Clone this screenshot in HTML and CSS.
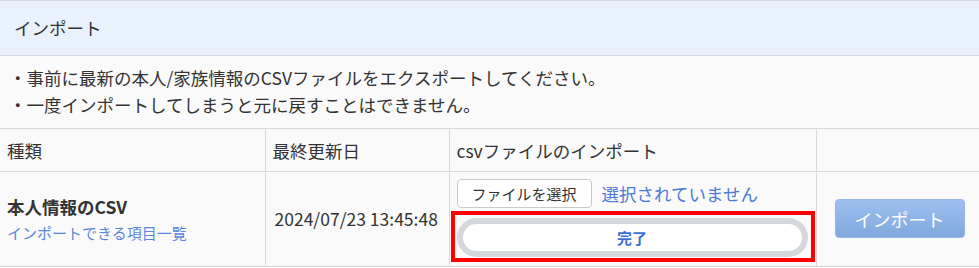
FILE: index.html
```html
<!DOCTYPE html>
<html lang="ja">
<head>
    <meta charset="UTF-8">
    <meta name="viewport" content="width=device-width, initial-scale=1.0">
    <title>インポート</title>
    <link rel="stylesheet" href="styles.css">
</head>
<body>
    <div class="panel">
        <div class="panel-head">インポート</div>
        <div class="panel-notes">
            <p>・事前に最新の本人/家族情報のCSVファイルをエクスポートしてください。</p>
            <p>・一度インポートしてしまうと元に戻すことはできません。</p>
        </div>
        <table class="import-table">
            <thead>
                <tr>
                    <th class="col-kind">種類</th>
                    <th class="col-date">最終更新日</th>
                    <th class="col-file">csvファイルのインポート</th>
                    <th class="col-action"></th>
                </tr>
            </thead>
            <tbody>
                <tr>
                    <td>
                        <div class="kind-name">本人情報のCSV</div>
                        <a href="#" class="kind-link">インポートできる項目一覧</a>
                    </td>
                    <td class="date">2024/07/23 13:45:48</td>
                    <td class="file-cell">
                        <div class="file-row">
                            <button class="btn-choose">ファイルを選択</button>
                            <span class="file-none">選択されていません</span>
                        </div>
                        <div class="highlight">
                            <div class="done-pill">完了</div>
                        </div>
                    </td>
                    <td class="action-cell">
                        <button class="btn-import">インポート</button>
                    </td>
                </tr>
            </tbody>
        </table>
    </div>
</body>
</html>
```

FILE: styles.css
```css
*{
    padding: 0;
    margin: 0;
    box-sizing: border-box;
}
body{
    font-family: "Noto Sans CJK JP", "Noto Sans", sans-serif;
    font-size: 17.5px;
    color: #333;
    background: #fafafa;
}
.panel{
    border-top: 1px solid #d6d9de;
}
.panel-head{
    height: 55px;
    line-height: 54px;
    padding-left: 14px;
    background: #e8f1fc;
    border-bottom: 1px solid #d6d9de;
}
.panel-notes{
    padding: 8px 0 10px 9px;
    line-height: 27px;
    border-bottom: 1px solid #d6d9de;
}
.import-table{
    width: 100%;
    border-collapse: collapse;
    table-layout: fixed;
}
.import-table th,
.import-table td{
    border-right: 1px solid #d6d9de;
    border-bottom: 1px solid #d6d9de;
    padding: 0 8px;
    text-align: left;
    font-weight: normal;
    vertical-align: middle;
}
.import-table th:last-child,
.import-table td:last-child{
    border-right: none;
}
.import-table th{
    height: 42px;
    padding-top: 1px;
    padding-left: 7px;
}
.import-table td{
    height: 95px;
}
.col-kind{ width: 265px; }
.col-date{ width: 184px; }
.col-file{ width: 367px; }
.import-table .date{
    padding-left: 9px;
}
.import-table td:first-child{
    padding-left: 7px;
}
.kind-name{
    font-weight: bold;
    line-height: 27px;
}
.kind-link{
    display: block;
    font-size: 15px;
    line-height: 25px;
    color: #5b86e0;
    text-decoration: none;
}
.import-table .file-cell{
    padding: 4px 0 0 7px;
}
.file-row{
    display: flex;
    align-items: center;
    gap: 10px;
}
.btn-choose{
    width: 135px;
    height: 29px;
    font-family: inherit;
    font-size: 15px;
    color: #333;
    background: #fff;
    border: 1px solid #c9c9c9;
    border-radius: 4px;
}
.file-none{
    color: #4a7ad8;
}
.highlight{
    margin: 3px 0 0 -6px;
    width: 364px;
    border: 4px solid #ff0000;
    padding: 3px 3px 1px 2px;
}
.done-pill{
    height: 39px;
    border: 6px solid #d4d7db;
    border-radius: 20px;
    background: #fff;
    text-align: center;
    line-height: 27px;
    font-size: 15px;
    font-weight: bold;
    color: #3d6ed8;
}
.import-table .action-cell{
    padding-left: 18px;
}
.btn-import{
    width: 130px;
    height: 39px;
    font-family: inherit;
    font-size: 18px;
    color: #fff;
    border: 1px solid #93b5e8;
    border-radius: 4px;
    background: linear-gradient(#9fbff1, #7fa8dc);
}
```
